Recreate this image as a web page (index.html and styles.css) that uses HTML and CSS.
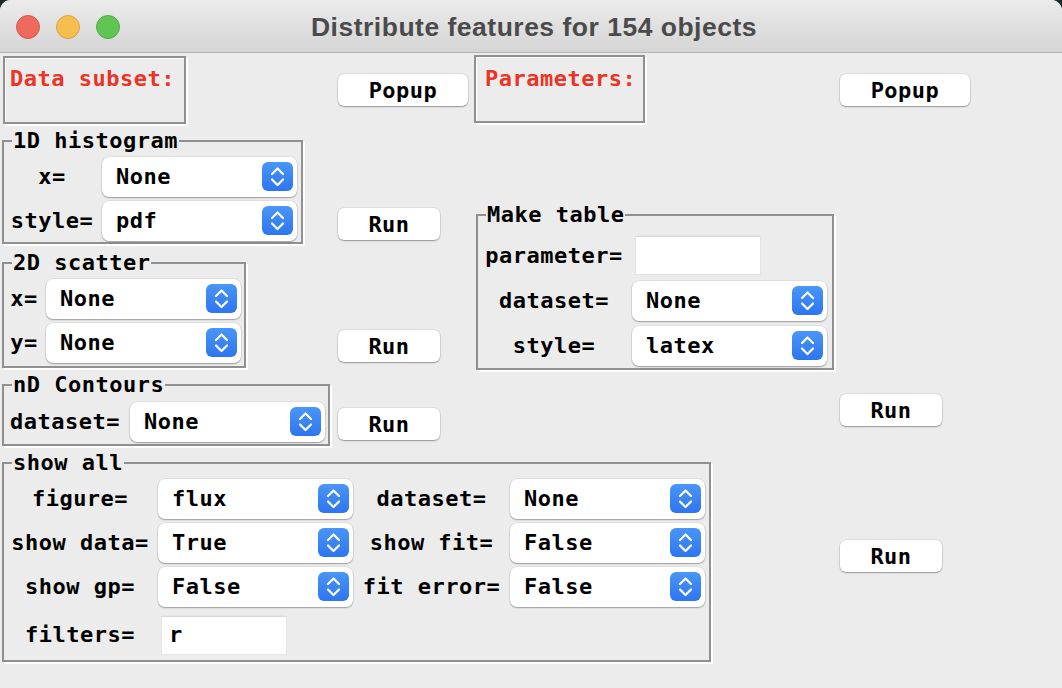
FILE: index.html
```html
<!DOCTYPE html>
<html lang="en">
<head>
<meta charset="utf-8">
<title>Distribute features for 154 objects</title>
<link rel="stylesheet" href="styles.css">
</head>
<body>
<div class="window">
  <header class="titlebar">
    <div class="lights">
      <span class="light red"></span>
      <span class="light yellow"></span>
      <span class="light green"></span>
    </div>
    <div class="title">Distribute features for 154 objects</div>
    <div></div>
  </header>

  <main class="content">
    <div class="frame frame-data c0 r0"><span class="heading">Data subset:</span></div>
    <button class="btn btn-popup c1 r0 pos-popup1">Popup</button>
    <div class="frame frame-params c2 r0"><span class="heading">Parameters:</span></div>
    <button class="btn btn-popup c3 r0 pos-popup2">Popup</button>

    <fieldset class="lf lf-hist c0 r1">
      <legend>1D histogram</legend>
      <span class="lbl">x=</span>
      <div class="select"><span class="val">None</span><span class="stepper"><svg width="31" height="29" viewBox="0 0 31 29"><path d="M10 12 L15.5 6.5 L21 12 M10 17.5 L15.5 23 L21 17.5" fill="none" stroke="#fff" stroke-width="2.2" stroke-linecap="round" stroke-linejoin="round"/></svg></span></div>
      <span class="lbl">style=</span>
      <div class="select"><span class="val">pdf</span><span class="stepper"><svg width="31" height="29" viewBox="0 0 31 29"><path d="M10 12 L15.5 6.5 L21 12 M10 17.5 L15.5 23 L21 17.5" fill="none" stroke="#fff" stroke-width="2.2" stroke-linecap="round" stroke-linejoin="round"/></svg></span></div>
    </fieldset>
    <button class="btn btn-run c1 r1 pos-run1">Run</button>

    <fieldset class="lf lf-table c2 r1-2">
      <legend>Make table</legend>
      <span class="lbl">parameter=</span>
      <div class="entry entry-gap"></div>
      <span class="lbl">dataset=</span>
      <div class="select"><span class="val">None</span><span class="stepper"><svg width="31" height="29" viewBox="0 0 31 29"><path d="M10 12 L15.5 6.5 L21 12 M10 17.5 L15.5 23 L21 17.5" fill="none" stroke="#fff" stroke-width="2.2" stroke-linecap="round" stroke-linejoin="round"/></svg></span></div>
      <span class="lbl">style=</span>
      <div class="select"><span class="val">latex</span><span class="stepper"><svg width="31" height="29" viewBox="0 0 31 29"><path d="M10 12 L15.5 6.5 L21 12 M10 17.5 L15.5 23 L21 17.5" fill="none" stroke="#fff" stroke-width="2.2" stroke-linecap="round" stroke-linejoin="round"/></svg></span></div>
    </fieldset>

    <fieldset class="lf lf-scatter c0 r2">
      <legend>2D scatter</legend>
      <span class="lbl">x=</span>
      <div class="select"><span class="val">None</span><span class="stepper"><svg width="31" height="29" viewBox="0 0 31 29"><path d="M10 12 L15.5 6.5 L21 12 M10 17.5 L15.5 23 L21 17.5" fill="none" stroke="#fff" stroke-width="2.2" stroke-linecap="round" stroke-linejoin="round"/></svg></span></div>
      <span class="lbl">y=</span>
      <div class="select"><span class="val">None</span><span class="stepper"><svg width="31" height="29" viewBox="0 0 31 29"><path d="M10 12 L15.5 6.5 L21 12 M10 17.5 L15.5 23 L21 17.5" fill="none" stroke="#fff" stroke-width="2.2" stroke-linecap="round" stroke-linejoin="round"/></svg></span></div>
    </fieldset>
    <button class="btn btn-run c1 r2 pos-run2">Run</button>

    <fieldset class="lf lf-contour c0 r3">
      <legend>nD Contours</legend>
      <span class="lbl">dataset=</span>
      <div class="select"><span class="val">None</span><span class="stepper"><svg width="31" height="29" viewBox="0 0 31 29"><path d="M10 12 L15.5 6.5 L21 12 M10 17.5 L15.5 23 L21 17.5" fill="none" stroke="#fff" stroke-width="2.2" stroke-linecap="round" stroke-linejoin="round"/></svg></span></div>
    </fieldset>
    <button class="btn btn-run c1 r3 pos-run3">Run</button>
    <button class="btn btn-run c3 r3 pos-run4">Run</button>

    <fieldset class="lf lf-all c0-2 r4">
      <legend>show all</legend>
      <span class="lbl">figure=</span>
      <div class="select"><span class="val">flux</span><span class="stepper"><svg width="31" height="29" viewBox="0 0 31 29"><path d="M10 12 L15.5 6.5 L21 12 M10 17.5 L15.5 23 L21 17.5" fill="none" stroke="#fff" stroke-width="2.2" stroke-linecap="round" stroke-linejoin="round"/></svg></span></div>
      <span class="lbl">dataset=</span>
      <div class="select"><span class="val">None</span><span class="stepper"><svg width="31" height="29" viewBox="0 0 31 29"><path d="M10 12 L15.5 6.5 L21 12 M10 17.5 L15.5 23 L21 17.5" fill="none" stroke="#fff" stroke-width="2.2" stroke-linecap="round" stroke-linejoin="round"/></svg></span></div>

      <span class="lbl">show data=</span>
      <div class="select"><span class="val">True</span><span class="stepper"><svg width="31" height="29" viewBox="0 0 31 29"><path d="M10 12 L15.5 6.5 L21 12 M10 17.5 L15.5 23 L21 17.5" fill="none" stroke="#fff" stroke-width="2.2" stroke-linecap="round" stroke-linejoin="round"/></svg></span></div>
      <span class="lbl">show fit=</span>
      <div class="select"><span class="val">False</span><span class="stepper"><svg width="31" height="29" viewBox="0 0 31 29"><path d="M10 12 L15.5 6.5 L21 12 M10 17.5 L15.5 23 L21 17.5" fill="none" stroke="#fff" stroke-width="2.2" stroke-linecap="round" stroke-linejoin="round"/></svg></span></div>

      <span class="lbl">show gp=</span>
      <div class="select"><span class="val">False</span><span class="stepper"><svg width="31" height="29" viewBox="0 0 31 29"><path d="M10 12 L15.5 6.5 L21 12 M10 17.5 L15.5 23 L21 17.5" fill="none" stroke="#fff" stroke-width="2.2" stroke-linecap="round" stroke-linejoin="round"/></svg></span></div>
      <span class="lbl">fit error=</span>
      <div class="select"><span class="val">False</span><span class="stepper"><svg width="31" height="29" viewBox="0 0 31 29"><path d="M10 12 L15.5 6.5 L21 12 M10 17.5 L15.5 23 L21 17.5" fill="none" stroke="#fff" stroke-width="2.2" stroke-linecap="round" stroke-linejoin="round"/></svg></span></div>

      <span class="lbl lbl-filters">filters=</span>
      <div class="entry entry-filters">r</div>
    </fieldset>
    <button class="btn btn-run c3 r4 pos-run5">Run</button>
  </main>
</div>
</body>
</html>
```

FILE: styles.css
```css
html, body {
  margin: 0;
  padding: 0;
  background: #1d2a2c;
}

.window {
  width: 1062px;
  height: 688px;
  background: #ececec;
  border-radius: 11px 11px 0 0;
  overflow: hidden;
  font-family: "DejaVu Sans Mono", "Liberation Mono", monospace;
  font-weight: bold;
  font-size: 22px;
  letter-spacing: 0.5px;
  line-height: 24px;
  color: #000;
}

/* ---------- title bar ---------- */
.titlebar {
  height: 52px;
  border-bottom: 1px solid #b4b4b4;
  background: linear-gradient(#ebebeb, #d5d5d5);
  display: grid;
  grid-template-columns: 1fr auto 1fr;
  align-items: center;
}

.lights {
  display: flex;
  gap: 16px;
  padding-left: 16px;
  padding-top: 2px;
}

.light {
  width: 24px;
  height: 24px;
  border-radius: 50%;
  box-sizing: border-box;
}
.light.red { background: #ee6a5f; border: 1px solid #d9574c; }
.light.yellow { background: #f6be4f; border: 1px solid #dca43c; }
.light.green { background: #61c554; border: 1px solid #50aa42; }

.title {
  font-family: "Liberation Sans", Arial, sans-serif;
  font-weight: bold;
  font-size: 26.5px;
  letter-spacing: 0.5px;
  color: #4b4b4b;
  padding-left: 6px;
  padding-top: 1px;
}

/* ---------- main grid ---------- */
.content {
  display: grid;
  grid-template-columns: 331px 141px 360px 1fr;
  grid-template-rows: 75px 122px 122px 78px auto;
  padding-left: 2px;
  align-items: start;
  justify-items: start;
}

.c0 { grid-column: 1; }
.c1 { grid-column: 2; }
.c2 { grid-column: 3; }
.c3 { grid-column: 4; }
.c0-2 { grid-column: 1 / 4; }
.r0 { grid-row: 1; }
.r1 { grid-row: 2; }
.r1-2 { grid-row: 2 / 4; }
.r2 { grid-row: 3; }
.r3 { grid-row: 4; }
.r4 { grid-row: 5; }

/* ---------- plain frames ---------- */
.frame {
  box-sizing: border-box;
  height: 68px;
  border: 2px solid #909090;
  box-shadow: 2px 2px 0 #fff, inset 1px 1px 0 #fff;
}
.frame-data {
  width: 183px;
  margin: 3px 0 0 1px;
  padding: 9px 0 0 5px;
}
.frame-params {
  width: 171px;
  margin-top: 2px;
  padding: 10px 0 0 9px;
}
.heading {
  color: #eb3425;
}

/* ---------- buttons ---------- */
.btn {
  font: inherit;
  letter-spacing: inherit;
  color: #000;
  height: 32px;
  border: 0;
  padding: 2px 0 0 0;
  background: #fff;
  border-radius: 6px;
  box-shadow: 0 0 0 0.5px rgba(0, 0, 0, 0.12), 0 1px 1.5px rgba(0, 0, 0, 0.32);
  display: flex;
  align-items: center;
  justify-content: center;
}
.btn-popup { width: 130px; }
.btn-run { width: 102px; }

.pos-popup1 { margin: 21px 0 0 5px; }
.pos-popup2 { margin: 21px 0 0 6px; }
.pos-run1 { margin: 80px 0 0 5px; }
.pos-run2 { margin: 80px 0 0 5px; }
.pos-run3 { margin: 36px 0 0 5px; }
.pos-run4 { margin: 22px 0 0 6px; }
.pos-run5 { margin: 90px 0 0 6px; }

/* ---------- label frames ---------- */
.lf {
  margin: 0;
  min-inline-size: 0;
  border: 2px solid #909090;
  box-shadow: 2px 2px 0 #fff;
  display: grid;
  align-items: center;
  padding: 0;
}
.lf legend {
  padding: 0 1px;
  margin-left: 8px;
  line-height: 24px;
}

.lf-hist {
  margin-top: 1px;
  grid-template-columns: 96px 195px;
  column-gap: 2px;
  row-gap: 4px;
  padding: 4px 4px 1px 0;
}
.lf-table {
  margin: 75px 0 0 2px;
  grid-template-columns: 152px 195px;
  column-gap: 2px;
  row-gap: 5px;
  padding: 9px 5px 2px 0;
}
.lf-scatter {
  margin-top: 1px;
  grid-template-columns: 40px 195px;
  column-gap: 2px;
  row-gap: 4px;
  padding: 4px 3px 3px 0;
}
.lf-contour {
  margin-top: 1px;
  grid-template-columns: 122px 195px;
  column-gap: 4px;
  padding: 5px 3px 2px 0;
}
.lf-all {
  margin-top: 1px;
  grid-template-columns: 152px 195px 153px 195px;
  column-gap: 2px;
  row-gap: 4px;
  padding: 4px 4px 6px 0;
}

.lbl {
  justify-self: center;
  white-space: pre;
}
.lbl-filters { margin-top: 5px; }

/* ---------- popup selects ---------- */
.select {
  box-sizing: border-box;
  width: 195px;
  height: 40px;
  background: #fff;
  border-radius: 7px;
  box-shadow: 0 0 0 0.5px rgba(0, 0, 0, 0.1), 0 1px 1.5px rgba(0, 0, 0, 0.3);
  display: flex;
  align-items: center;
  justify-content: space-between;
  padding: 0 4px 0 14px;
}
.stepper {
  width: 31px;
  height: 29px;
  border-radius: 6px;
  background: linear-gradient(#4a96f9, #2d75ee);
  display: flex;
  margin-bottom: 2px;
}
.stepper svg { display: block; }

/* ---------- entries ---------- */
.entry {
  box-sizing: border-box;
  width: 124px;
  height: 38px;
  background: #fff;
  box-shadow: inset 0 1px 0 #d6d6d6, 0 0 0 0.5px #dcdcdc;
  justify-self: start;
  margin-left: 4px;
  padding: 7px 0 0 7px;
}
.entry-gap { margin-bottom: 2px; }
.entry-filters { margin-top: 5px; }
```
